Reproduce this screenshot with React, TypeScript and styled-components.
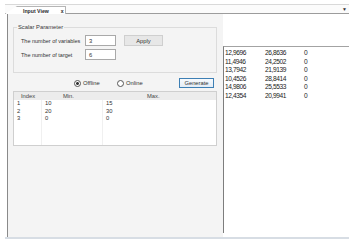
import styled, { createGlobalStyle } from 'styled-components'

const GlobalStyle = createGlobalStyle`
  * {
    box-sizing: border-box;
  }
  body {
    margin: 0;
    background: #ffffff;
    font-family: 'Liberation Sans', Arial, sans-serif;
    font-size: 5.8px;
    color: #333333;
    white-space: nowrap;
  }
`

const Window = styled.div`
  margin: 4px 0 0 5px;
  width: 344px;
  height: 235px;
  display: flex;
  flex-direction: column;
  border-bottom: 2px solid #d7dde4;
`

const TabStrip = styled.div`
  height: 10px;
  border-top: 1px solid #d9d9d9;
  border-bottom: 1px solid #9c9c9c;
  background: #fbfbfb;
  display: flex;
  align-items: flex-end;
  justify-content: space-between;
  padding-right: 2px;
`

const Tab = styled.div`
  height: 8px;
  width: 61px;
  margin-bottom: -1px;
  background: #ffffff;
  border-top: 1px solid #b5b5b5;
  border-right: 1px solid #b5b5b5;
  clip-path: polygon(12px 0, 100% 0, 100% 100%, 0 100%);
  display: flex;
  align-items: center;
  gap: 12px;
  padding-left: 18px;
  font-weight: 700;
  font-size: 5.2px;
  color: #2a2a2a;
`

const Arrow = styled.span`
  font-size: 5px;
  color: #333;
  margin-bottom: 1px;
`

const Body = styled.div`
  flex: 1;
  display: flex;
`

const LeftPane = styled.div`
  width: 216px;
  background: #f4f4f4;
  border-left: 1px solid #8a8a8a;
  margin-left: 2px;
  padding: 10px 6px 0 5px;
  display: flex;
  flex-direction: column;
`

const Group = styled.fieldset`
  margin: 0;
  padding: 5px 0 0 7px;
  height: 49px;
  border: 1px solid #dcdcdc;
  display: flex;
  flex-direction: column;
  gap: 3px;
`

const Legend = styled.legend`
  padding: 0 1px;
  margin-left: -4px;
  color: #3a3a3a;
`

const FieldRow = styled.div`
  display: flex;
  align-items: center;
`

const FieldLabel = styled.span`
  width: 64px;
  font-size: 5.5px;
  color: #333;
`

const Input = styled.div`
  width: 31px;
  height: 11px;
  background: #ffffff;
  border: 1px solid #a9a9a9;
  padding-left: 3px;
  display: flex;
  align-items: center;
`

const Button = styled.div<{ $primary?: boolean }>`
  height: 11px;
  display: flex;
  align-items: center;
  justify-content: center;
  border: 1px solid ${(p) => (p.$primary ? '#3d7fb4' : '#cfcfcf')};
  background: ${(p) =>
    p.$primary ? 'linear-gradient(#f7fafd, #e3ecf5)' : '#e7e7e7'};
  color: #333;
`

const ApplyButton = styled(Button)`
  width: 39px;
  margin-left: 8px;
`

const ModeRow = styled.div`
  display: flex;
  align-items: center;
  margin-top: 5px;
  height: 10px;
`

const Radio = styled.span<{ $checked?: boolean }>`
  width: 7px;
  height: 7px;
  border-radius: 50%;
  border: 1px solid #555;
  background: ${(p) => (p.$checked ? 'radial-gradient(#333 35%, #fff 45%)' : '#fff')};
  margin-right: 2px;
`

const RadioLabel = styled.span<{ $width: number }>`
  width: ${(p) => p.$width}px;
`

const GenerateButton = styled(Button)`
  width: 35px;
  height: 10px;
  margin-left: auto;
  margin-right: 3px;
`

const Table = styled.div`
  margin-top: 3px;
  width: 204px;
  height: 55px;
  border: 1px solid #cfcfcf;
  background: #ffffff;
  display: flex;
  flex-direction: column;
`

const HeaderRow = styled.div`
  height: 8px;
  background: #ececec;
  display: grid;
  grid-template-columns: 28px 61px 1fr;
  align-items: center;
  color: #444;
`

const HeaderCell = styled.span<{ $pad: number }>`
  padding-left: ${(p) => p.$pad}px;
`

const Grid = styled.div`
  flex: 1;
  display: grid;
  grid-template-columns: 28px 61px 1fr;
  grid-template-rows: repeat(3, 7.5px) 1fr;
`

const Cell = styled.div<{ $last?: boolean }>`
  padding-left: 3px;
  line-height: 7.5px;
  border-right: ${(p) => (p.$last ? 'none' : '1px solid #f0f0f0')};
`

const RightPane = styled.div`
  flex: 1;
  background: #ffffff;
  padding-top: 32px;
  padding-bottom: 4px;
  display: flex;
`

const List = styled.div`
  flex: 1;
  border-top: 1px solid #a3a3a3;
  border-left: 1px solid #7d7d7d;
  padding: 2px 0 0 1px;
  font-size: 6.6px;
  letter-spacing: -0.4px;
  color: #222;
`

const ListRow = styled.div`
  display: grid;
  grid-template-columns: 40px 39px 1fr;
  height: 8.5px;
  line-height: 8.5px;
`

const fields = [
  { label: 'The number of variables', value: '3' },
  { label: 'The number of target', value: '6' },
]

const ranges = [
  ['1', '10', '15'],
  ['2', '20', '30'],
  ['3', '0', '0'],
]

const values = [
  ['12,9696', '26,8636', '0'],
  ['11,4946', '24,2502', '0'],
  ['13,7942', '21,9139', '0'],
  ['10,4526', '28,8414', '0'],
  ['14,9806', '25,5533', '0'],
  ['12,4354', '20,9941', '0'],
]

export default function App() {
  return (
    <>
      <GlobalStyle />
      <Window>
        <TabStrip>
          <Tab>
            <span>Input View</span>
            <span>x</span>
          </Tab>
          <Arrow>▼</Arrow>
        </TabStrip>
        <Body>
          <LeftPane>
            <Group>
              <Legend>Scalar Parameter</Legend>
              {fields.map((f, i) => (
                <FieldRow key={f.label}>
                  <FieldLabel>{f.label}</FieldLabel>
                  <Input>{f.value}</Input>
                  {i === 0 && <ApplyButton>Apply</ApplyButton>}
                </FieldRow>
              ))}
            </Group>
            <ModeRow>
              <RadioLabel $width={61} />
              <Radio $checked />
              <RadioLabel $width={34}>Offline</RadioLabel>
              <Radio />
              <RadioLabel $width={30}>Online</RadioLabel>
              <GenerateButton $primary>Generate</GenerateButton>
            </ModeRow>
            <Table>
              <HeaderRow>
                <HeaderCell $pad={7}>Index</HeaderCell>
                <HeaderCell $pad={21}>Min.</HeaderCell>
                <HeaderCell $pad={44}>Max.</HeaderCell>
              </HeaderRow>
              <Grid>
                {ranges.map((r) =>
                  r.map((c, j) => (
                    <Cell key={r[0] + j} $last={j === 2}>
                      {c}
                    </Cell>
                  ))
                )}
                <Cell />
                <Cell />
                <Cell $last />
              </Grid>
            </Table>
          </LeftPane>
          <RightPane>
            <List>
              {values.map((row) => (
                <ListRow key={row[0]}>
                  {row.map((v, j) => (
                    <span key={j}>{v}</span>
                  ))}
                </ListRow>
              ))}
            </List>
          </RightPane>
        </Body>
      </Window>
    </>
  )
}
